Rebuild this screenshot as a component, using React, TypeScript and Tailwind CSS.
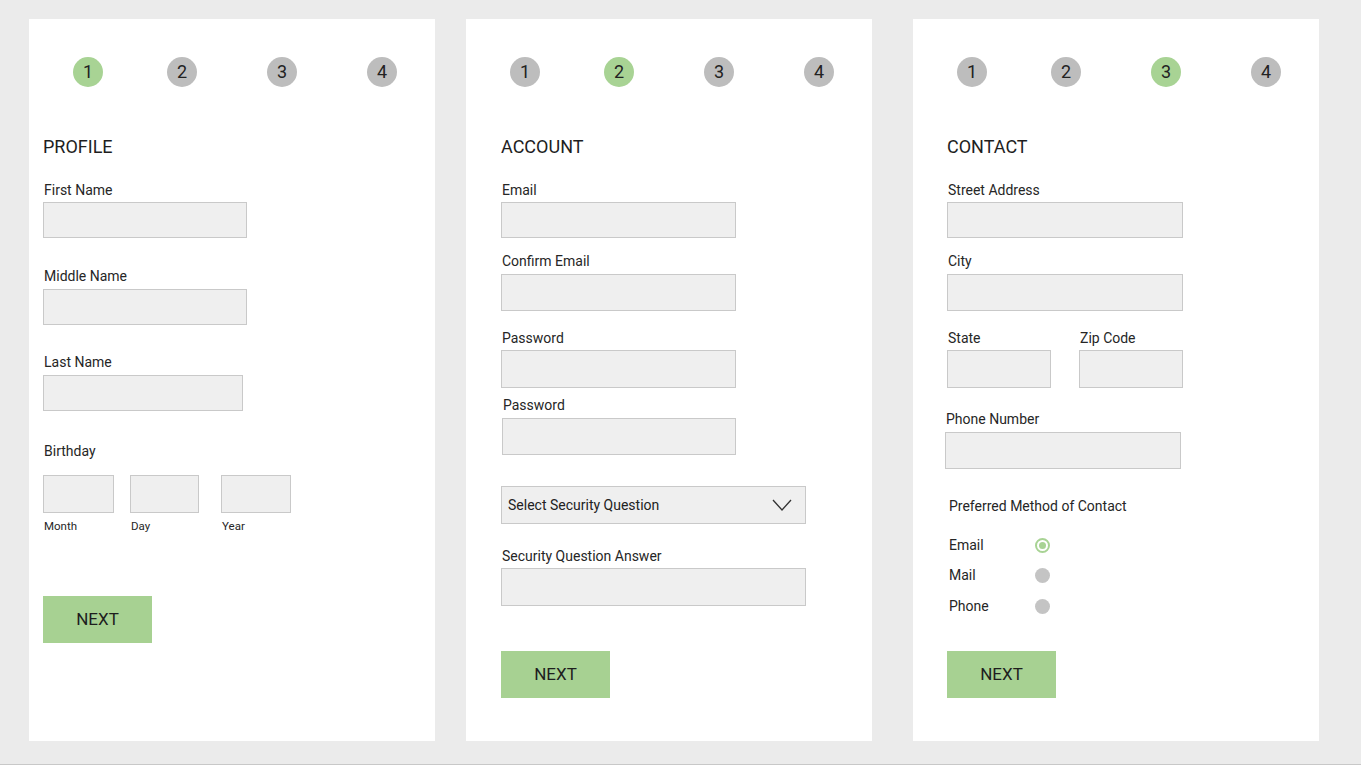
const font = { fontFamily: "Roboto, 'Noto Sans', Arial, sans-serif" };

const inputCls = "h-[36px] border border-[#c9c9c9] bg-[#efefef]";

function Steps({ active }: { active: number }) {
  return (
    <div className="flex pl-[44px]">
      {[1, 2, 3, 4].map((n, i) => (
        <div
          key={n}
          className={`flex size-[30px] items-center justify-center rounded-full text-[18px] leading-none text-[#222] ${
            n === active ? "bg-[#a8d394]" : "bg-[#bdbdbd]"
          } ${i === 0 ? "" : i === 1 ? "ml-[64px]" : "ml-[70px]"}`}
        >
          {n}
        </div>
      ))}
    </div>
  );
}

function Heading({ children }: { children: string }) {
  return <h2 className="mt-[49px] text-[18px] leading-[22px] text-[#1e1e1e]">{children}</h2>;
}

function Label({ children, className = "" }: { children: string; className?: string }) {
  return <p className={`text-[14px] leading-4 text-[#262626] ${className}`}>{children}</p>;
}

function NextButton({ className = "" }: { className?: string }) {
  return (
    <button
      className={`flex h-[47px] w-[109px] items-center justify-center bg-[#a7d192] text-[17px] text-[#1e1e1e] ${className}`}
    >
      NEXT
    </button>
  );
}

function Radio({ checked }: { checked?: boolean }) {
  return checked ? (
    <span className="flex size-[15px] items-center justify-center rounded-full border-2 border-[#a8d394] bg-white">
      <span className="size-[7px] rounded-full bg-[#a8d394]" />
    </span>
  ) : (
    <span className="size-[15px] rounded-full bg-[#c4c4c4]" />
  );
}

function ProfilePanel() {
  return (
    <section className="flex h-[722px] w-[406px] flex-col bg-white pt-[38px]">
      <Steps active={1} />
      <div className="flex flex-col items-start px-[14px]">
        <Heading>PROFILE</Heading>
        <Label className="mt-[24px] pl-px">First Name</Label>
        <div className={`mt-[4px] w-[204px] ${inputCls}`} />
        <Label className="mt-[30px] pl-px">Middle Name</Label>
        <div className={`mt-[5px] w-[204px] ${inputCls}`} />
        <Label className="mt-[29px] pl-px">Last Name</Label>
        <div className={`mt-[5px] w-[200px] ${inputCls}`} />
        <Label className="mt-[32px] pl-px">Birthday</Label>
        <div className="mt-[16px] flex">
          {[
            ["Month", "w-[71px]", ""],
            ["Day", "w-[69px]", "ml-[16px]"],
            ["Year", "w-[70px]", "ml-[22px]"],
          ].map(([label, w, ml]) => (
            <div key={label} className={`flex flex-col ${ml}`}>
              <div className={`h-[38px] ${w} border border-[#c9c9c9] bg-[#efefef]`} />
              <p className="mt-[6px] pl-px text-[11.5px] leading-[14px] text-[#262626]">{label}</p>
            </div>
          ))}
        </div>
        <NextButton className="mt-[63px]" />
      </div>
    </section>
  );
}

function AccountPanel() {
  return (
    <section className="ml-[31px] flex h-[722px] w-[406px] flex-col bg-white pt-[38px]">
      <Steps active={2} />
      <div className="flex flex-col items-start px-[35px]">
        <Heading>ACCOUNT</Heading>
        <Label className="mt-[24px] pl-px">Email</Label>
        <div className={`mt-[4px] w-[235px] ${inputCls}`} />
        <Label className="mt-[15px] pl-px">Confirm Email</Label>
        <div className="mt-[5px] h-[37px] w-[235px] border border-[#c9c9c9] bg-[#efefef]" />
        <Label className="mt-[19px] pl-px">Password</Label>
        <div className="mt-[4px] h-[38px] w-[235px] border border-[#c9c9c9] bg-[#efefef]" />
        <Label className="mt-[9px] pl-[2px]">Password</Label>
        <div className="ml-px mt-[5px] h-[37px] w-[234px] border border-[#c9c9c9] bg-[#efefef]" />
        <div className="mt-[31px] flex h-[38px] w-[305px] items-center justify-between border border-[#c9c9c9] bg-[#efefef] pl-[6px] pr-[13px]">
          <span className="pt-px text-[14px] text-[#222]">Select Security Question</span>
          <svg width="20" height="12" viewBox="0 0 20 12" fill="none">
            <polyline points="1,1 10,11 19,1" stroke="#333" strokeWidth="1.3" />
          </svg>
        </div>
        <Label className="mt-[24px] pl-px">Security Question Answer</Label>
        <div className="mt-[4px] h-[38px] w-[305px] border border-[#c9c9c9] bg-[#efefef]" />
        <NextButton className="mt-[45px]" />
      </div>
    </section>
  );
}

function ContactPanel() {
  return (
    <section className="ml-[41px] flex h-[722px] w-[406px] flex-col bg-white pt-[38px]">
      <Steps active={3} />
      <div className="flex flex-col items-start px-[34px]">
        <Heading>CONTACT</Heading>
        <Label className="mt-[24px] pl-px">Street Address</Label>
        <div className={`mt-[4px] w-[236px] ${inputCls}`} />
        <Label className="mt-[15px] pl-px">City</Label>
        <div className="mt-[5px] h-[37px] w-[236px] border border-[#c9c9c9] bg-[#efefef]" />
        <div className="mt-[19px] flex gap-[28px]">
          {["State", "Zip Code"].map((l) => (
            <div key={l} className="flex flex-col">
              <Label className="pl-px">{l}</Label>
              <div className="mt-[4px] h-[38px] w-[104px] border border-[#c9c9c9] bg-[#efefef]" />
            </div>
          ))}
        </div>
        <Label className="-ml-px mt-[23px]">Phone Number</Label>
        <div className="-ml-[2px] mt-[5px] h-[37px] w-[236px] border border-[#c9c9c9] bg-[#efefef]" />
        <Label className="ml-[2px] mt-[29px]">Preferred Method of Contact</Label>
        <div className="mt-[23px] flex flex-col">
          {[
            ["Email", true, ""],
            ["Mail", false, "mt-[14px]"],
            ["Phone", false, "mt-[15px]"],
          ].map(([l, c, mt]) => (
            <div key={l as string} className={`flex h-4 items-center ${mt}`}>
              <Label className="w-[88px] pl-[2px]">{l as string}</Label>
              <Radio checked={c as boolean} />
            </div>
          ))}
        </div>
        <NextButton className="mt-[37px]" />
      </div>
    </section>
  );
}

export default function App() {
  return (
    <div
      className="flex h-[765px] w-full border-b border-[#c8c8c8] bg-[#ebebeb] pl-[29px] pt-[19px]"
      style={font}
    >
      <ProfilePanel />
      <AccountPanel />
      <ContactPanel />
    </div>
  );
}
